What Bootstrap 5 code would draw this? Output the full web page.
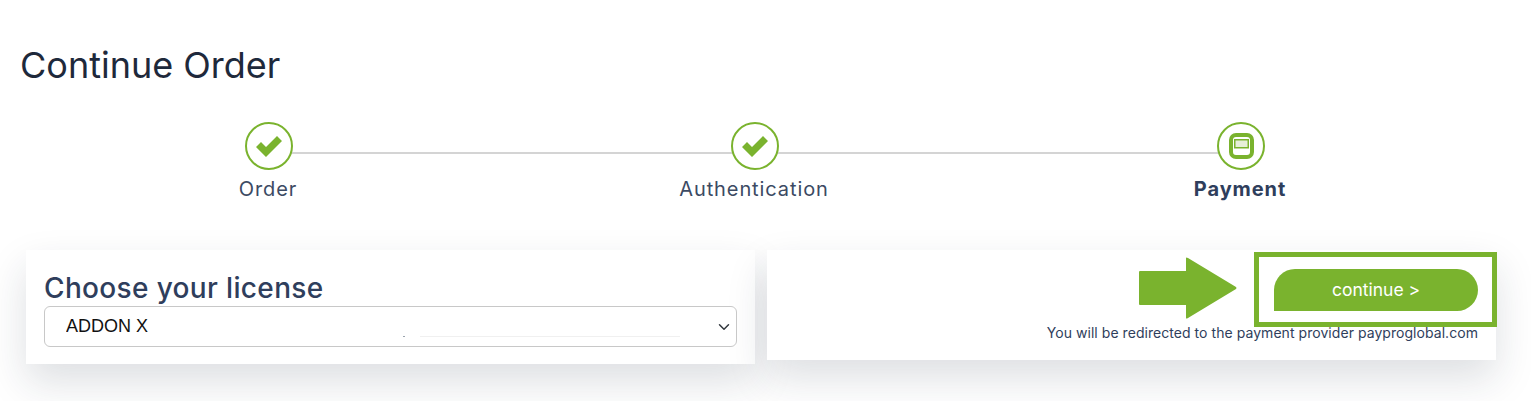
<!DOCTYPE html>
<html lang="en">
<head>
    <meta charset="UTF-8">
    <meta name="viewport" content="width=device-width, initial-scale=1.0">
    <title>Continue Order</title>
    <link href="https://cdn.jsdelivr.net/npm/bootstrap@5.3.0/dist/css/bootstrap.min.css" rel="stylesheet">
    <style>
        body { font-family: "Inter", sans-serif; color: #2f3e5c; background: #fff; min-height: 401px; }
        .page-title { font-family: "Inter", sans-serif; font-size: 36px; font-weight: 400; color: #1e293b; margin: 0; padding: 44px 0 0 20px; line-height: 42px; }
        .order-steps { position: relative; margin: 36px 0 0 25px; width: 1458px; }
        .steps-line { position: absolute; top: 30px; left: 243px; right: 243px; height: 2px; background: #d4d4d4; }
        .step-item { position: relative; text-align: center; font-size: 20px; letter-spacing: .9px; line-height: 28px; color: #3c4a63; }
        .step-circle { width: 48px; height: 48px; border: 2px solid #7ab32e; border-radius: 50%; background: #fff; margin: 0 0 5px calc(50% - 23px); }
        .step-active { font-weight: 700; color: #2f3e5c; }
        .cards-wrap { margin: 47px 0 0 26px; width: 1470px; gap: 12px; }
        .panel-box { width: 729px; background: #fff; box-shadow: 0 18px 40px rgba(30, 40, 60, .15); }
        .panel-left { height: 114px; padding: 20px 18px 0; }
        .panel-right { height: 110px; padding: 2px 0 0; }
        .license-title { font-size: 28px; letter-spacing: .35px; font-weight: 500; line-height: 36px; color: #2f3e5c; margin: 0; }
        .license-select-wrap { position: relative; }
        .license-select { height: 41px; padding: 0 30px 0 21px; font-family: "Liberation Sans", sans-serif; font-size: 18px; color: #111; border-color: #c8c8c8; background-position: right 4px center; background-size: 16px 12px; }
        .select-streak { position: absolute; left: 376px; top: 30px; width: 260px; height: 1px; background: #f0f0f0; }
        .select-speck { position: absolute; left: 359px; top: 30px; width: 2px; height: 1px; background: #9aa3ad; }
        .arrow-icon { margin-right: 17px; margin-top: 5px; }
        .continue-box { width: 243px; height: 75px; border: 5px solid #7ab32e; padding: 12px 14px 0 15px; margin-right: -1px; }
        .continue-btn { width: 204px; height: 42px; background: #7ab32e; color: #fff; border: 0; border-radius: 21px 21px 21px 0; font-size: 17.5px; padding: 0; }
        .continue-btn:hover { background: #6fa328; color: #fff; }
        .redirect-note { font-size: 14px; letter-spacing: .05px; line-height: 16px; text-align: right; padding: 0 18px 0 0; margin: -2px 0 0; color: #2f3e5c; }
    </style>
</head>
<body>
    <h1 class="page-title">Continue Order</h1>

    <!-- Steps -->
    <div class="order-steps">
        <div class="steps-line"></div>
        <div class="row g-0">
            <div class="col-4 step-item">
                <div class="step-circle d-flex align-items-center justify-content-center">
                    <svg width="26" height="22" viewBox="0 0 26 22"><path d="M0 12 L5 7 L10 12 L21 1 L26 6 L10 22 Z" fill="#7ab32e"/></svg>
                </div>
                Order
            </div>
            <div class="col-4 step-item">
                <div class="step-circle d-flex align-items-center justify-content-center">
                    <svg width="26" height="22" viewBox="0 0 26 22"><path d="M0 12 L5 7 L10 12 L21 1 L26 6 L10 22 Z" fill="#7ab32e"/></svg>
                </div>
                Authentication
            </div>
            <div class="col-4 step-item step-active">
                <div class="step-circle d-flex align-items-center justify-content-center">
                    <svg width="25" height="26" viewBox="0 0 25 26">
                        <rect x="2" y="2" width="21" height="22" rx="5" fill="#fff" stroke="#7ab32e" stroke-width="4"/>
                        <rect x="5.75" y="6.75" width="13.5" height="8" fill="#e6efd8" stroke="#7ab32e" stroke-width="1.5"/>
                    </svg>
                </div>
                Payment
            </div>
        </div>
    </div>

    <!-- License and payment -->
    <div class="cards-wrap d-flex align-items-start">
        <div class="panel-box panel-left">
            <h2 class="license-title">Choose your license</h2>
            <div class="license-select-wrap">
                <select class="form-select license-select">
                    <option>ADDON X</option>
                </select>
                <div class="select-speck"></div>
                <div class="select-streak"></div>
            </div>
        </div>
        <div class="panel-box panel-right">
            <div class="d-flex justify-content-end align-items-start">
                <svg class="arrow-icon" width="98" height="62" viewBox="0 0 98 62">
                    <path d="M1 14 H47 V1 Q47 0 49 1 L97 30 Q98 31 97 32 L49 61 Q47 62 47 61 V48 H1 Q0 48 0 47 V15 Q0 14 1 14 Z" fill="#7ab32e"/>
                </svg>
                <div class="continue-box">
                    <button type="button" class="btn continue-btn">continue &gt;</button>
                </div>
            </div>
            <p class="redirect-note">You will be redirected to the payment provider payproglobal.com</p>
        </div>
    </div>

    <script src="https://cdn.jsdelivr.net/npm/bootstrap@5.3.0/dist/js/bootstrap.bundle.min.js"></script>
</body>
</html>
